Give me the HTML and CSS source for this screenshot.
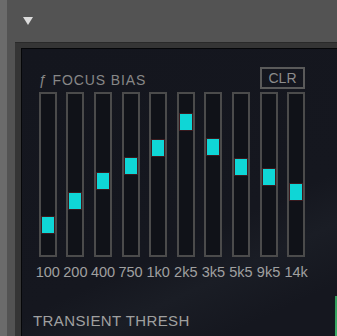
FILE: index.html
```html
<!DOCTYPE html>
<html lang="en">
<head>
    <meta charset="UTF-8">
    <title>Focus Bias</title>
    <link rel="stylesheet" href="styles.css">
</head>
<body>
    <div class="app">
        <div class="top">
            <span class="arrow"></span>
        </div>
        <div class="frame">
            <div class="panel">
                <!-- Header -->
                <div class="head">
                    <span class="title">&fnof; FOCUS BIAS</span>
                    <button class="clr">CLR</button>
                </div>

                <!-- Bands -->
                <div class="bands">
                    <div class="band"><div class="track"><div class="knob" style="margin-top: 123px"></div></div><div class="label">100</div></div>
                    <div class="band"><div class="track"><div class="knob" style="margin-top: 99px"></div></div><div class="label">200</div></div>
                    <div class="band"><div class="track"><div class="knob" style="margin-top: 79px"></div></div><div class="label">400</div></div>
                    <div class="band"><div class="track"><div class="knob" style="margin-top: 64px"></div></div><div class="label">750</div></div>
                    <div class="band"><div class="track"><div class="knob" style="margin-top: 46px"></div></div><div class="label">1k0</div></div>
                    <div class="band"><div class="track"><div class="knob" style="margin-top: 20px"></div></div><div class="label">2k5</div></div>
                    <div class="band"><div class="track"><div class="knob" style="margin-top: 45px"></div></div><div class="label">3k5</div></div>
                    <div class="band"><div class="track"><div class="knob" style="margin-top: 65px"></div></div><div class="label">5k5</div></div>
                    <div class="band"><div class="track"><div class="knob" style="margin-top: 75px"></div></div><div class="label">9k5</div></div>
                    <div class="band"><div class="track"><div class="knob" style="margin-top: 90px"></div></div><div class="label">14k</div></div>
                </div>

                <div class="section">TRANSIENT THRESH</div>
                <div class="meter"></div>
            </div>
        </div>
    </div>
</body>
</html>
```

FILE: styles.css
```css
html, body {
    margin: 0;
    padding: 0;
}
body {
    width: 337px;
    height: 336px;
    overflow: hidden;
    background: #535353;
    font-family: 'Liberation Sans', Arial, sans-serif;
}
.app {
    height: 336px;
    border-left: 7px solid #6b6b6b;
    display: flex;
    flex-direction: column;
}
.top {
    height: 42px;
    flex-shrink: 0;
}
.arrow {
    display: block;
    width: 0;
    height: 0;
    margin: 17px 0 0 16px;
    border-left: 5px solid transparent;
    border-right: 5px solid transparent;
    border-top: 8px solid #dcdcdc;
}
.frame {
    flex: 1;
    margin-left: 8px;
    padding: 5px 0 0 6px;
    background: #353535;
    border-top: 1px solid #2a2a2a;
    display: flex;
}
.panel {
    position: relative;
    flex: 1;
    background: linear-gradient(155deg, #14161e 0%, #15171f 62%, #1a1d25 74%, #15171f 88%);
    border-top: 1px solid #060709;
    border-left: 1px solid #060709;
    padding-top: 18px;
}
.head {
    width: 266px;
    margin-left: 17px;
    display: flex;
    justify-content: space-between;
    align-items: center;
    height: 22px;
}
.title {
    color: #878787;
    font-size: 14px;
    letter-spacing: 0.9px;
    padding-top: 4px;
}
.clr {
    width: 45px;
    height: 22px;
    background: transparent;
    border: 2px solid #5a5a5a;
    color: #8c8c8c;
    font-family: 'Liberation Sans', Arial, sans-serif;
    font-size: 14px;
    padding: 0;
}
.bands {
    display: flex;
    margin: 3px 0 0 12px;
}
.band {
    width: 27.6px;
    display: flex;
    flex-direction: column;
    align-items: center;
}
.track {
    width: 14px;
    height: 161px;
    border: 2px solid #4b4b4b;
    background: #101218;
}
.knob {
    width: 12px;
    height: 16px;
    margin-left: 1px;
    background: #0fd6d6;
    box-shadow: 0 0 0 1px #3a1a1e;
}
.label {
    margin-top: 7px;
    color: #a0a0a0;
    font-size: 14.5px;
    line-height: 16px;
    letter-spacing: 0;
    white-space: nowrap;
}
.section {
    margin: 32px 0 0 11px;
    color: #a0a0a0;
    font-size: 15px;
    line-height: 17px;
    letter-spacing: 0.4px;
}
.meter {
    position: absolute;
    right: 0;
    bottom: 0;
    width: 2px;
    height: 40px;
    background: linear-gradient(#2f9a5a, #3cb06a);
}
```
